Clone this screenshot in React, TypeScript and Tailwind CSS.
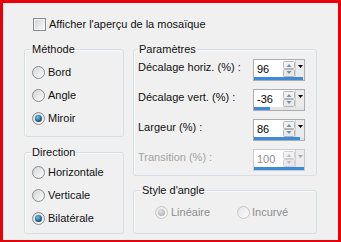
import type { ReactNode } from 'react';

const Radio = ({ checked, disabled }: { checked?: boolean; disabled?: boolean }) => (
  <span
    className={`flex items-center justify-center w-[13px] h-[13px] rounded-full border shrink-0 ${
      disabled
        ? 'border-[#c4c4c4] bg-[linear-gradient(135deg,#e6e6e6,#fbfbfb)]'
        : 'border-[#8a8c8e] bg-[linear-gradient(135deg,#d2d4d6,#fdfdfd)]'
    }`}
  >
    {checked && (
      <span
        className={`w-[7px] h-[7px] rounded-full ${
          disabled
            ? 'bg-[radial-gradient(circle_at_40%_35%,#e2e2e2,#a2a2a2)]'
            : 'bg-[radial-gradient(circle_at_40%_35%,#6cc6ee,#0d4563_75%)]'
        }`}
      />
    )}
  </span>
);

const RadioRow = ({ label, checked }: { label: string; checked?: boolean }) => (
  <div className="flex items-center h-[23px]">
    <Radio checked={checked} />
    <span className="ml-[3px] leading-[13px]">{label}</span>
  </div>
);

// legend offset is counted from the inner edge of the border
const GroupBox = ({ title, offset, className, children }: { title: string; offset: string; className: string; children: ReactNode }) => (
  <fieldset className={`border border-[#d5dfe5] rounded-[3px] shadow-[inset_1px_1px_0_#fafafa] ${className}`}>
    <legend className={`${offset} px-[1px] leading-[13px]`}>{title}</legend>
    {children}
  </fieldset>
);

const SpinBox = ({ value, pct, disabled }: { value: string; pct: number; disabled?: boolean }) => (
  <div className={`flex flex-col w-[52px] h-[22px] border bg-white ${disabled ? 'border-[#c9cdd2]' : 'border-[#abadb3]'}`}>
    <div className="flex flex-1">
      <span className={`flex-1 pl-[3px] pt-[3px] leading-[13px] ${disabled ? 'text-[#8d8d8d]' : 'text-black'}`}>{value}</span>
      <svg width="12" height="16" viewBox="0 0 12 16" className="mt-[1px]">
        <rect x="0.5" y="0.5" width="11" height="7" rx="1" fill="#f2f2f2" stroke={disabled ? '#d0d0d0' : '#b5b5b5'} />
        <rect x="0.5" y="8.5" width="11" height="7" rx="1" fill="#e9e9e9" stroke={disabled ? '#d0d0d0' : '#b5b5b5'} />
        <path d="M3.5 6 L6 3 L8.5 6 Z" fill={disabled ? '#b9c2cc' : '#7c8ea3'} />
        <path d="M3.5 10 L6 13 L8.5 10 Z" fill={disabled ? '#b9c2cc' : '#7c8ea3'} />
      </svg>
      <div className="flex items-start justify-center w-[9px] pt-[5px] bg-[#ebebeb] border-l border-[#d2d2d2]">
        <svg width="5" height="3" viewBox="0 0 5 3">
          <path d="M0 0 L5 0 L2.5 3 Z" fill={disabled ? '#a8a8a8' : '#000'} />
        </svg>
      </div>
    </div>
    <div className="h-[3px] bg-[#e4e4e4]">
      <div className="h-full bg-[#3c8ad8]" style={{ width: `${pct}%` }} />
    </div>
  </div>
);

const params = [
  { label: 'Décalage horiz. (%) :', value: '96', pct: 98 },
  { label: 'Décalage vert. (%) :', value: '-36', pct: 32 },
  { label: 'Largeur (%) :', value: '86', pct: 91 },
  { label: 'Transition (%) :', value: '100', pct: 100, disabled: true },
];

export default function App() {
  return (
    <div className="w-[341px] h-[242px] overflow-hidden border-[3px] border-b-2 border-[#e8000b] bg-[#f0f0f0] text-[11px] text-[#111] font-['Liberation_Sans',Arial,sans-serif]">
      <div className="flex items-center ml-[30px] mt-[15px] h-[13px]">
        <span className="w-[13px] h-[13px] border border-[#8a8c8e] bg-[linear-gradient(135deg,#d0d2d4,#fbfbfb)] shadow-[inset_0_0_0_1px_#f4f4f4]" />
        <span className="ml-[3px] leading-[13px]">Afficher l'aperçu de la mosaïque</span>
      </div>

      <div className="flex gap-[9px] ml-[21px] mt-[12px]">
        <div className="flex flex-col gap-[9px] w-[100px]">
          <GroupBox title="Méthode" offset="ml-[6px]" className="h-[94px]">
            <div className="pl-[7px] pt-[5px]">
              <RadioRow label="Bord" />
              <RadioRow label="Angle" />
              <RadioRow label="Miroir" checked />
            </div>
          </GroupBox>
          <GroupBox title="Direction" offset="ml-[6px]" className="h-[88px]">
            <div className="pl-[7px] pt-[2px]">
              <RadioRow label="Horizontale" />
              <RadioRow label="Verticale" />
              <RadioRow label="Bilatérale" checked />
            </div>
          </GroupBox>
        </div>

        <div className="flex flex-col gap-[8px] w-[184px]">
          <GroupBox title="Paramètres" offset="ml-[4px]" className="h-[133px]">
            <div className="flex flex-col gap-[8px] pl-[4px] pr-[11px] pt-[3px]">
              {params.map(p => (
                <div key={p.label} className="flex items-start justify-between">
                  <span className={`pt-[2px] leading-[13px] ${p.disabled ? 'text-[#a3a3a3]' : ''}`}>{p.label}</span>
                  <SpinBox value={p.value} pct={p.pct} disabled={p.disabled} />
                </div>
              ))}
            </div>
          </GroupBox>
          <GroupBox title="Style d'angle" offset="ml-[7px]" className="h-[50px]">
            <div className="flex items-center h-[23px] mt-[4px] pl-[21px] text-[#8d8d8d]">
              <div className="flex items-center w-[82px]">
                <Radio checked disabled />
                <span className="ml-[3px] leading-[13px]">Linéaire</span>
              </div>
              <div className="flex items-center">
                <Radio disabled />
                <span className="ml-[2px] leading-[13px]">Incurvé</span>
              </div>
            </div>
          </GroupBox>
        </div>
      </div>
    </div>
  );
}
